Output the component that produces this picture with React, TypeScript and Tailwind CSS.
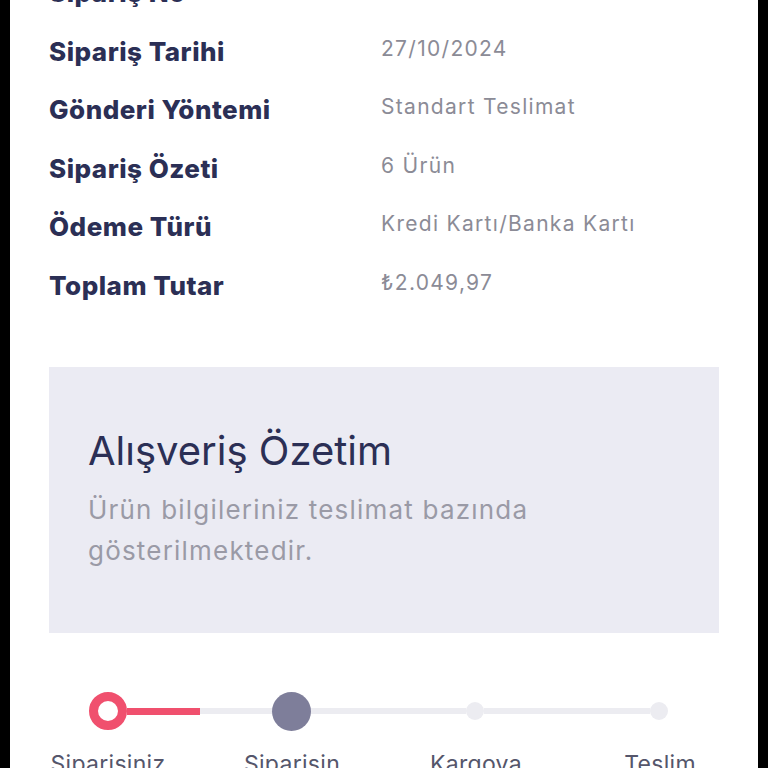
const ROWS = [
  { label: 'Sipariş No', value: '' },
  { label: 'Sipariş Tarihi', value: '27/10/2024' },
  { label: 'Gönderi Yöntemi', value: 'Standart Teslimat' },
  { label: 'Sipariş Özeti', value: '6 Ürün' },
  { label: 'Ödeme Türü', value: 'Kredi Kartı/Banka Kartı' },
  { label: 'Toplam Tutar', value: '₺2.049,97' },
]

const STEPS = ['Siparişiniz', 'Siparişin', 'Kargoya', 'Teslim']

export default function App() {
  return (
    <div className="w-[768px] h-[768px] overflow-hidden bg-black px-[10px]" style={{ fontFamily: 'Inter, "Noto Sans", sans-serif' }}>
      <div className="h-full bg-white w-[748px] flex flex-col">
        {/* Order details */}
        <div className="px-[39px] -mt-[22px]">
          {ROWS.map((row) => (
            <div key={row.label} className="flex items-start h-[58.6px]">
              <div className="w-[332px] text-[26px] leading-[30px] font-extrabold tracking-[0.5px] text-[#2b2f55]">{row.label}</div>
              <div className="text-[21px] leading-[22px] mt-[1px] tracking-[1.3px] text-[#8b8b96]">{row.value}</div>
            </div>
          ))}
        </div>

        {/* Summary box */}
        <div className="mx-[39px] mt-[37px] h-[266px] shrink-0 bg-[#ebebf3] pt-[62px] px-[39px]">
          <h2 className="text-[40px] leading-[44px] text-[#2b2f55]">Alışveriş Özetim</h2>
          <p className="mt-[16px] text-[26px] leading-[41px] tracking-[1.2px] text-[#9a9aa6] w-[500px]">
            Ürün bilgileriniz teslimat bazında gösterilmektedir.
          </p>
        </div>

        {/* Stepper */}
        <div className="mt-[59px] ml-[79px] w-[579px] flex items-center">
          <div className="w-[38px] h-[38px] rounded-full border-[9px] border-[#f0506e] bg-white shrink-0" />
          <div className="w-[145px] h-[6px] bg-[#ececf1] flex">
            <div className="w-[73px] h-[7px] -mt-[0.5px] bg-[#f0506e]" />
          </div>
          <div className="w-[39px] h-[39px] rounded-full bg-[#7e7e9a] shrink-0" />
          <div className="w-[155px] h-[6px] bg-[#ececf1]" />
          <div className="w-[18px] h-[18px] rounded-full bg-[#ececf1] shrink-0" />
          <div className="w-[166px] h-[6px] bg-[#ececf1]" />
          <div className="w-[18px] h-[18px] rounded-full bg-[#ececf1] shrink-0" />
        </div>
        <div className="mt-[19px] ml-[6px] grid grid-cols-[repeat(4,184px)]">
          {STEPS.map((s) => (
            <div key={s} className="text-center text-[23px] leading-[28px] tracking-[0.3px] text-[#55566b]">{s}</div>
          ))}
        </div>
      </div>
    </div>
  )
}
